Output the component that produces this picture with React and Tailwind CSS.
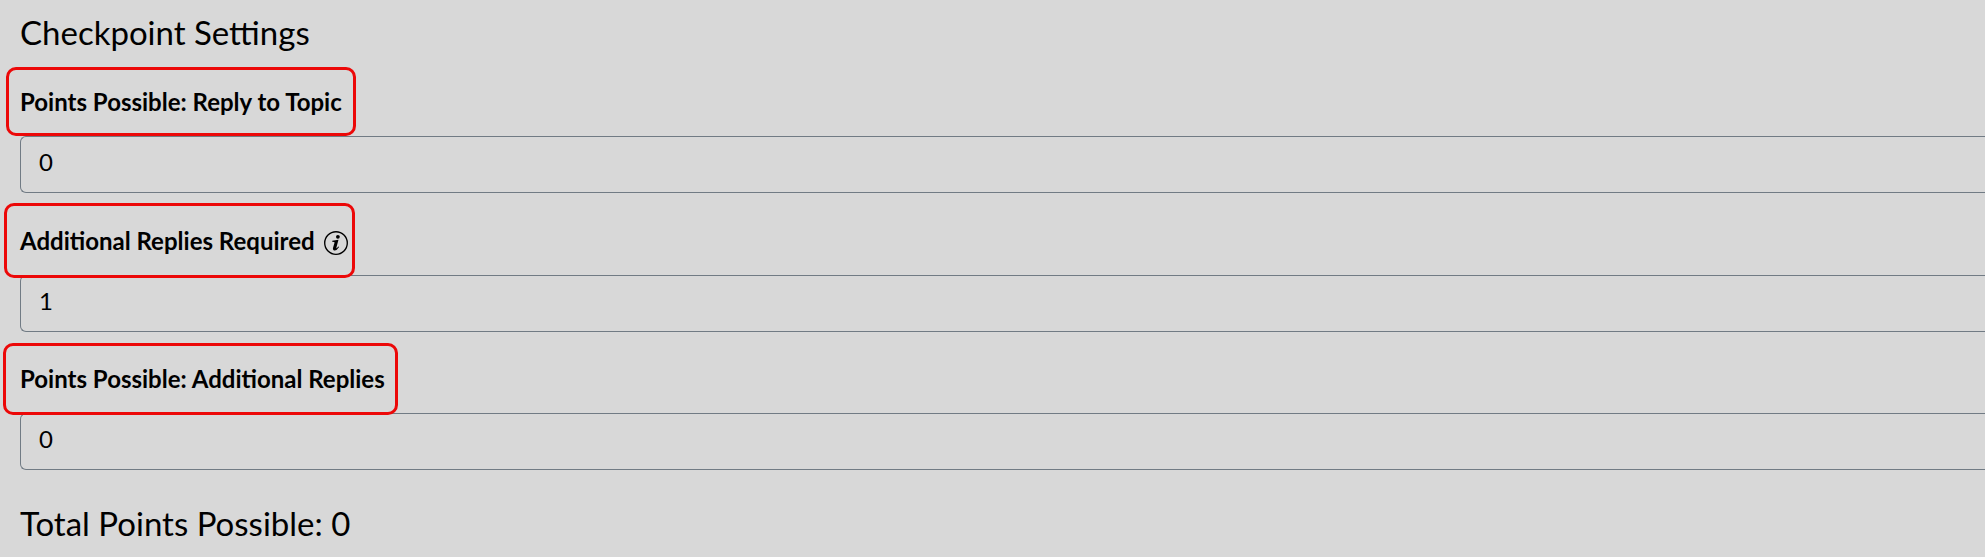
function InfoIcon() {
  return (
    <svg className="ml-[9px] mt-[5px] h-6 w-6 shrink-0" viewBox="0 0 24 24" fill="none">
      <circle cx="12" cy="12" r="11.3" stroke="#000" strokeWidth="1.35" />
      <circle cx="13.9" cy="5.8" r="1.9" fill="#000" />
      <path d="M8.3 9.8 L14.5 8.7 L12.4 16.6 Q12.2 17.7 13 17.1 L14.4 15.5 L15.1 16.1 Q12.8 19.7 10.5 19.5 Q8.4 19.1 9.1 16.5 L10.6 11.5 Q10.7 10.7 8.2 10.7 Z" fill="#000" />
    </svg>
  );
}

const fields = [
  { label: 'Points Possible: Reply to Topic', value: '0', box: 'ml-[6px] h-[69px] w-[350px] pl-[11px]' },
  { label: 'Additional Replies Required', value: '1', info: true, box: 'ml-[4px] mt-[10px] -mb-[3px] h-[75px] w-[351px] pl-[13px]' },
  { label: 'Points Possible: Additional Replies', value: '0', box: 'ml-[3px] mt-[11px] -mb-[2px] h-[72px] w-[395px] pl-[14px]' },
];

function App() {
  return (
    <div className="flex h-[557px] w-full flex-col overflow-hidden bg-[#d8d8d8] font-['Lato',sans-serif] text-black">
      <h2 className="h-[67px] pl-5 pt-[11px] text-[33px] leading-[42px]">Checkpoint Settings</h2>
      {fields.map((field) => (
        <div key={field.label} className="flex flex-col">
          <div className={`relative z-10 flex items-center whitespace-nowrap rounded-[10px] border-3 border-[#ec0808] text-[24px] font-bold ${field.box}`}>
            {field.label}
            {field.info && <InfoIcon />}
          </div>
          <div className="ml-5 h-[57px] rounded-l-[6px] border border-r-0 border-[#717b84] pl-[18px] text-[24px] leading-[49px]">
            {field.value}
          </div>
        </div>
      ))}
      <h2 className="pl-5 pt-8 text-[33px] leading-[42px]">Total Points Possible: 0</h2>
    </div>
  );
}

export default App;
